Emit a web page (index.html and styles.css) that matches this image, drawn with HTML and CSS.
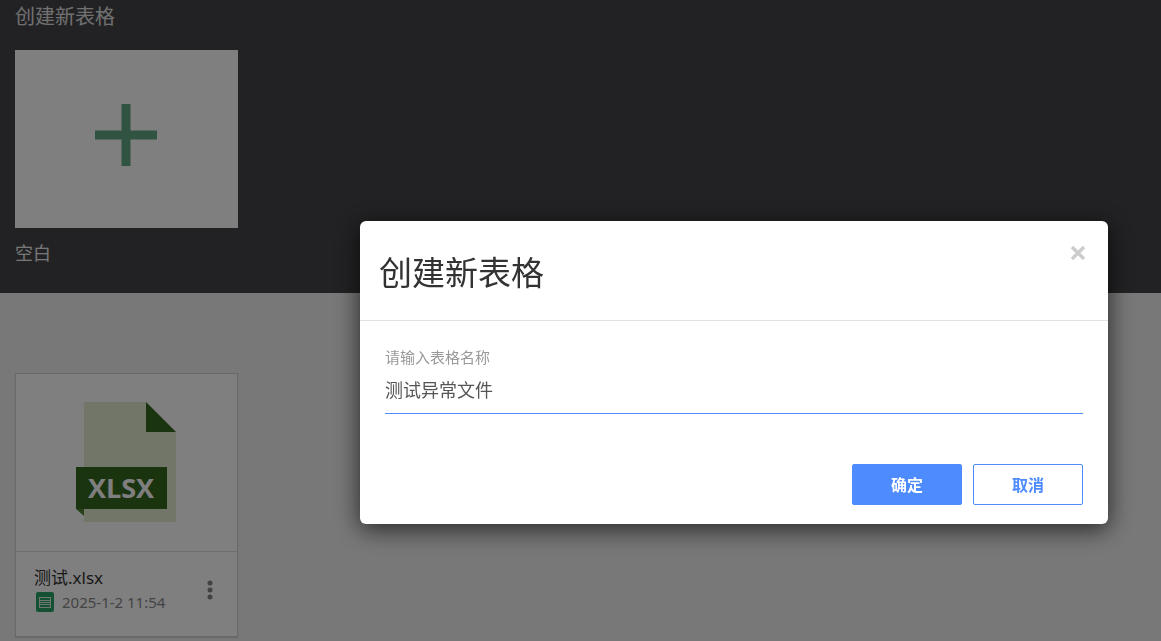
FILE: index.html
```html
<!DOCTYPE html>
<html lang="zh-CN">
<head>
    <meta charset="UTF-8">
    <meta name="viewport" content="width=device-width, initial-scale=1.0">
    <title>创建新表格</title>
    <link rel="stylesheet" href="styles.css">
</head>
<body>
    <section class="create-section">
        <h2 class="section-title">创建新表格</h2>
        <button type="button" class="blank-card" aria-label="空白">
            <svg width="62" height="62" viewBox="0 0 62 62">
                <path d="M26.5 0h9v26.5H62v9H35.5V62h-9V35.5H0v-9h26.5z" fill="#62a684"/>
            </svg>
        </button>
        <p class="blank-name">空白</p>
    </section>

    <main class="file-list">
        <article class="file-card">
            <div class="file-preview">
                <svg width="100" height="120" viewBox="0 0 100 120">
                    <path d="M8 0h62l30 30v90H8z" fill="#e2edd3"/>
                    <path d="M70 0l30 30H70z" fill="#366820"/>
                    <path d="M0 107h8v7z" fill="#4e8430"/>
                    <path d="M0 65h91v42H0z" fill="#366820"/>
                    <text x="45" y="96" class="file-type" text-anchor="middle">XLSX</text>
                </svg>
            </div>
            <div class="file-info">
                <div class="file-text">
                    <div class="file-name">测试.xlsx</div>
                    <div class="file-meta">
                        <svg width="18" height="20" viewBox="0 0 18 20">
                            <rect width="18" height="20" rx="2" fill="#28a267"/>
                            <path d="M3 5h12v11H3z" fill="#e2eee6"/>
                            <path d="M4 6h10v2H4zM4 9h10v1H4zM4 11h10v1H4zM4 13h10v2H4z" fill="#28a267"/>
                        </svg>
                        <span>2025-1-2 11:54</span>
                    </div>
                </div>
                <button type="button" class="more-btn" aria-label="更多">
                    <svg width="6" height="20" viewBox="0 0 6 20" fill="#858585">
                        <circle cx="3" cy="3" r="2.5"/>
                        <circle cx="3" cy="10" r="2.5"/>
                        <circle cx="3" cy="17" r="2.5"/>
                    </svg>
                </button>
            </div>
        </article>
    </main>

    <div class="overlay">
        <form class="modal" role="dialog" aria-labelledby="modalTitle">
            <div class="modal-header">
                <h1 class="modal-title" id="modalTitle">创建新表格</h1>
                <button type="button" class="close-btn" aria-label="关闭">
                    <svg width="16" height="16" viewBox="0 0 16 16">
                        <path d="M2 2l12 12M14 2L2 14" stroke="#ccc" stroke-width="3.4"/>
                    </svg>
                </button>
            </div>
            <div class="modal-body">
                <label class="name-label" for="tableName">请输入表格名称</label>
                <input type="text" class="name-input" id="tableName" value="测试异常文件">
                <div class="modal-actions">
                    <button type="submit" class="btn btn-primary">确定</button>
                    <button type="button" class="btn">取消</button>
                </div>
            </div>
        </form>
    </div>
</body>
</html>
```
FILE: styles.css
```css
* {
    box-sizing: border-box;
}
body {
    margin: 0;
    min-height: 100vh;
    overflow: hidden;
    font-family: "Noto Sans", "Noto Sans CJK SC", sans-serif;
    background: #f0f0f0;
}
button {
    padding: 0;
    border: none;
    background: none;
    font-family: inherit;
    cursor: pointer;
}
svg {
    display: block;
}
.create-section {
    padding: 0 15px 27px;
    background: #444448;
}
.section-title {
    margin: 0 0 16px;
    font-size: 20px;
    font-weight: 400;
    line-height: 34px;
    color: #e0e0e0;
}
.blank-card {
    display: flex;
    align-items: center;
    justify-content: center;
    width: 223px;
    height: 178px;
    padding: 0 1px 8px 0;
    background: #fff;
}
.blank-name {
    margin: 12px 0 0;
    font-size: 18px;
    font-weight: 400;
    line-height: 26px;
    color: #eee;
}
.file-list {
    padding: 80px 15px 0;
}
.file-card {
    width: 223px;
    border: 1px solid #d2d2d2;
    background: #fff;
    box-shadow: 0 1px 1px rgba(0,0,0,0.1);
}
.file-preview {
    display: flex;
    justify-content: center;
    height: 178px;
    padding: 28px 2px 0 0;
    border-bottom: 1px solid #dcdcdc;
}
.file-type {
    font-family: "Open Sans", sans-serif;
    font-size: 27px;
    font-weight: 700;
    fill: #fff;
}
.file-info {
    display: flex;
    justify-content: space-between;
    padding: 14px 24px 22px 18px;
}
.file-name {
    font-size: 17px;
    line-height: 24px;
    color: #333;
}
.file-meta {
    display: flex;
    align-items: center;
    gap: 8px;
    padding-left: 2px;
    font-size: 15px;
    line-height: 24px;
    color: #888;
}
.more-btn {
    align-self: flex-start;
    padding-top: 14px;
}
.overlay {
    position: fixed;
    inset: 0;
    padding: 221px 53px 0;
    background: rgba(0,0,0,0.5);
}
.modal {
    max-width: 748px;
    margin-left: auto;
    border-radius: 6px;
    background: #fff;
    box-shadow: 0 5px 25px rgba(0,0,0,0.7);
}
.modal-header {
    display: flex;
    justify-content: space-between;
    align-items: flex-start;
    padding: 24px 22px 20px 19px;
    border-bottom: 1px solid #e2e2e2;
}
.modal-title {
    margin: 0;
    font-size: 33px;
    font-weight: 400;
    line-height: 55px;
    color: #333;
}
.modal-body {
    padding: 24px 25px 19px;
}
.name-label {
    display: block;
    font-size: 15px;
    line-height: 24px;
    color: #999;
}
.name-input {
    display: block;
    width: 100%;
    height: 45px;
    padding: 0 0 5px;
    border: none;
    border-bottom: 1px solid #4d8bff;
    outline: none;
    background: none;
    font-family: inherit;
    font-size: 18px;
    color: #555;
}
.modal-actions {
    display: flex;
    justify-content: flex-end;
    gap: 11px;
    margin-top: 50px;
}
.btn {
    width: 110px;
    height: 41px;
    padding-bottom: 2px;
    border: 1px solid #4d8bff;
    border-radius: 2px;
    font-size: 16px;
    font-weight: 700;
    color: #4d8bff;
}
.btn-primary {
    background: #4d8bff;
    color: #fff;
}
```
